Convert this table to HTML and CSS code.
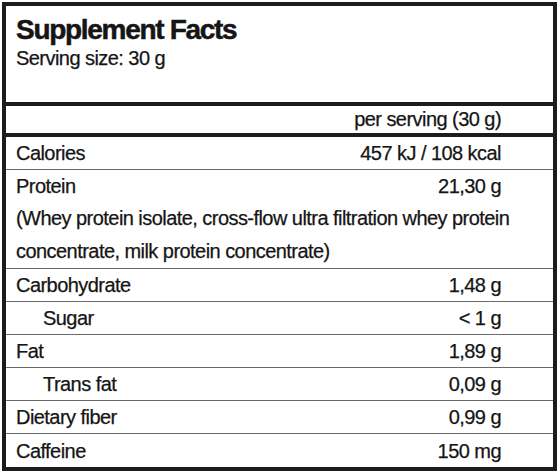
FILE: index.html
```html
<!DOCTYPE html>
<html lang="en">
<head>
	<meta charset="UTF-8">
	<title>Supplement Facts</title>
	<link rel="stylesheet" href="styles.css">
</head>
<body>
	<div class="label">
		<div class="head">
			<h1 class="title">Supplement Facts</h1>
			<p class="serving">Serving size: 30 g</p>
		</div>
		<div class="per">per serving (30 g)</div>
		<ul class="rows">
			<li class="row"><span>Calories</span><span>457 kJ / 108 kcal</span></li>
			<li class="row multi">
				<div class="line"><span>Protein</span><span>21,30 g</span></div>
				<p class="note">(Whey protein isolate, cross-flow ultra filtration whey protein<br>concentrate, milk protein concentrate)</p>
			</li>
			<li class="row"><span>Carbohydrate</span><span>1,48 g</span></li>
			<li class="row sub"><span>Sugar</span><span>&lt; 1 g</span></li>
			<li class="row"><span>Fat</span><span>1,89 g</span></li>
			<li class="row sub"><span>Trans fat</span><span>0,09 g</span></li>
			<li class="row"><span>Dietary fiber</span><span>0,99 g</span></li>
			<li class="row"><span>Caffeine</span><span>150 mg</span></li>
		</ul>
	</div>
</body>
</html>
```

FILE: styles.css
```css
*{
	margin: 0;
	padding: 0;
}
body{
	margin: 2px;
	background: #fff;
	color: #151515;
	font-family: "Liberation Sans", Arial, sans-serif;
	font-size: 20px;
	letter-spacing: -0.55px;
	-webkit-text-stroke: 0.25px #151515;
}
.label{
	width: 555px;
	box-sizing: border-box;
	border: 4px solid #1c1c1c;
}
.head{
	height: 100px;
	box-sizing: border-box;
	padding: 9px 10px 0;
	border-bottom: 4px solid #1c1c1c;
}
.title{
	font-size: 28px;
	line-height: 30px;
	font-weight: bold;
	letter-spacing: -1.3px;
	-webkit-text-stroke: 0.5px #151515;
}
.serving{
	line-height: 27px;
}
.per{
	height: 27px;
	line-height: 27px;
	text-align: right;
	padding-right: 52px;
	border-bottom: 4px solid #1c1c1c;
}
.rows{
	list-style: none;
}
.row{
	display: flex;
	justify-content: space-between;
	line-height: 31px;
	padding: 1px 52px 0 10px;
	border-bottom: 1px solid #6a6a6a;
}
.row:last-child{
	border-bottom: none;
	line-height: 32px;
}
.multi{
	display: block;
	padding-right: 0;
}
.multi .line{
	display: flex;
	justify-content: space-between;
	padding-right: 52px;
}
.note{
	line-height: 33px;
	white-space: nowrap;
}
.sub span:first-child{
	padding-left: 27px;
}
```
